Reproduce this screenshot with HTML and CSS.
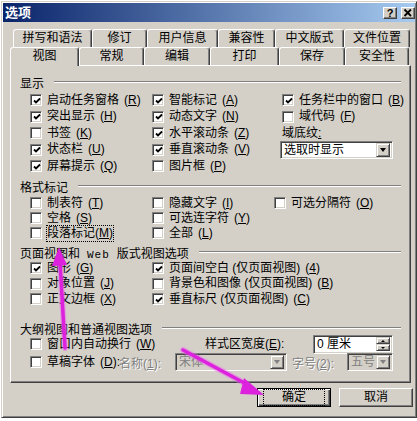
FILE: index.html
```html
<!DOCTYPE html>
<html lang="zh-CN">
<head>
    <meta charset="UTF-8">
    <title>选项</title>
    <link rel="stylesheet" href="styles.css">
</head>
<body>
    <div class="dialog">
        <div class="titlebar">
            <span class="title">选项</span>
            <div class="title-btns">
                <span class="tbtn">?</span>
                <span class="tbtn">
                    <svg width="12" height="10" viewBox="0 0 12 10"><path d="M2.5 1.5 L9 8 M9 1.5 L2.5 8" stroke="#000" stroke-width="1.8"/></svg>
                </span>
            </div>
        </div>

        <div class="tabs">
            <div class="tab-row back">
                <div class="tab">拼写和语法</div>
                <div class="tab">修订</div>
                <div class="tab">用户信息</div>
                <div class="tab">兼容性</div>
                <div class="tab">中文版式</div>
                <div class="tab">文件位置</div>
            </div>
            <div class="tab-row front">
                <div class="tab active">视图</div>
                <div class="tab">常规</div>
                <div class="tab">编辑</div>
                <div class="tab">打印</div>
                <div class="tab">保存</div>
                <div class="tab">安全性</div>
            </div>

            <div class="panel">
                <!-- 显示 -->
                <div class="group-head"><span>显示</span><i class="rule"></i></div>
                <div class="grid grid-display">
                    <label class="chk"><span class="box"><svg width="8" height="8" viewBox="0 0 8 8"><path d="M1 3.5 L3 5.5 L7 1.5" fill="none" stroke="#000" stroke-width="1.8"/></svg></span>启动任务窗格<span class="key">(<u>R</u>)</span></label>
                    <label class="chk"><span class="box"><svg width="8" height="8" viewBox="0 0 8 8"><path d="M1 3.5 L3 5.5 L7 1.5" fill="none" stroke="#000" stroke-width="1.8"/></svg></span>智能标记<span class="key">(<u>A</u>)</span></label>
                    <label class="chk"><span class="box"><svg width="8" height="8" viewBox="0 0 8 8"><path d="M1 3.5 L3 5.5 L7 1.5" fill="none" stroke="#000" stroke-width="1.8"/></svg></span>任务栏中的窗口<span class="key">(<u>B</u>)</span></label>

                    <label class="chk"><span class="box"><svg width="8" height="8" viewBox="0 0 8 8"><path d="M1 3.5 L3 5.5 L7 1.5" fill="none" stroke="#000" stroke-width="1.8"/></svg></span>突出显示<span class="key">(<u>H</u>)</span></label>
                    <label class="chk"><span class="box"><svg width="8" height="8" viewBox="0 0 8 8"><path d="M1 3.5 L3 5.5 L7 1.5" fill="none" stroke="#000" stroke-width="1.8"/></svg></span>动态文字<span class="key">(<u>N</u>)</span></label>
                    <label class="chk"><span class="box"></span>域代码<span class="key">(<u>F</u>)</span></label>

                    <label class="chk"><span class="box"></span>书签<span class="key">(<u>K</u>)</span></label>
                    <label class="chk"><span class="box"><svg width="8" height="8" viewBox="0 0 8 8"><path d="M1 3.5 L3 5.5 L7 1.5" fill="none" stroke="#000" stroke-width="1.8"/></svg></span>水平滚动条<span class="key">(<u>Z</u>)</span></label>
                    <span class="field-label">域底纹<span class="key"><u>:</u></span></span>

                    <label class="chk"><span class="box"><svg width="8" height="8" viewBox="0 0 8 8"><path d="M1 3.5 L3 5.5 L7 1.5" fill="none" stroke="#000" stroke-width="1.8"/></svg></span>状态栏<span class="key">(<u>U</u>)</span></label>
                    <label class="chk"><span class="box"><svg width="8" height="8" viewBox="0 0 8 8"><path d="M1 3.5 L3 5.5 L7 1.5" fill="none" stroke="#000" stroke-width="1.8"/></svg></span>垂直滚动条<span class="key">(<u>V</u>)</span></label>
                    <div class="combo combo-shading">
                        <span class="combo-text">选取时显示</span>
                        <span class="combo-btn"><i class="arrow"></i></span>
                    </div>

                    <label class="chk"><span class="box"><svg width="8" height="8" viewBox="0 0 8 8"><path d="M1 3.5 L3 5.5 L7 1.5" fill="none" stroke="#000" stroke-width="1.8"/></svg></span>屏幕提示<span class="key">(<u>Q</u>)</span></label>
                    <label class="chk"><span class="box"></span>图片框<span class="key">(<u>P</u>)</span></label>
                </div>

                <!-- 格式标记 -->
                <div class="group-head gap-a"><span>格式标记</span><i class="rule"></i></div>
                <div class="grid grid-marks">
                    <label class="chk"><span class="box"></span>制表符<span class="key">(<u>T</u>)</span></label>
                    <label class="chk"><span class="box"></span>隐藏文字<span class="key">(<u>I</u>)</span></label>
                    <label class="chk"><span class="box"></span>可选分隔符<span class="key">(<u>O</u>)</span></label>

                    <label class="chk"><span class="box"></span>空格<span class="key">(<u>S</u>)</span></label>
                    <label class="chk"><span class="box"></span>可选连字符<span class="key">(<u>Y</u>)</span></label>
                    <span></span>

                    <label class="chk"><span class="box"></span><span class="focus">段落标记<span class="key">(<u>M</u>)</span></span></label>
                    <label class="chk"><span class="box"></span>全部<span class="key">(<u>L</u>)</span></label>
                </div>

                <!-- 页面视图和 Web 版式视图选项 -->
                <div class="group-head gap-a"><span>页面视图和<span class="latin">Web</span>版式视图选项</span><i class="rule"></i></div>
                <div class="grid grid-web">
                    <label class="chk"><span class="box"><svg width="8" height="8" viewBox="0 0 8 8"><path d="M1 3.5 L3 5.5 L7 1.5" fill="none" stroke="#000" stroke-width="1.8"/></svg></span>图形<span class="key">(<u>G</u>)</span></label>
                    <label class="chk"><span class="box"><svg width="8" height="8" viewBox="0 0 8 8"><path d="M1 3.5 L3 5.5 L7 1.5" fill="none" stroke="#000" stroke-width="1.8"/></svg></span>页面间空白 (仅页面视图)<span class="key">(<u>4</u>)</span></label>

                    <label class="chk"><span class="box"></span>对象位置<span class="key">(<u>J</u>)</span></label>
                    <label class="chk"><span class="box"></span>背景色和图像 (仅页面视图)<span class="key">(<u>B</u>)</span></label>

                    <label class="chk"><span class="box"></span>正文边框<span class="key">(<u>X</u>)</span></label>
                    <label class="chk"><span class="box"><svg width="8" height="8" viewBox="0 0 8 8"><path d="M1 3.5 L3 5.5 L7 1.5" fill="none" stroke="#000" stroke-width="1.8"/></svg></span>垂直标尺 (仅页面视图)<span class="key">(<u>C</u>)</span></label>
                </div>

                <!-- 大纲视图和普通视图选项 -->
                <div class="group-head gap-b"><span>大纲视图和普通视图选项</span><i class="rule"></i></div>
                <div class="outline-row">
                    <label class="chk wrap-cell"><span class="box"></span>窗口内自动换行<span class="key">(<u>W</u>)</span></label>
                    <span class="field-label style-label">样式区宽度<span class="key">(<u>E</u>):</span></span>
                    <div class="spin">
                        <span class="spin-text">0 厘米</span>
                        <span class="spin-btns">
                            <span class="spin-btn"><i class="arrow up"></i></span>
                            <span class="spin-btn"><i class="arrow"></i></span>
                        </span>
                    </div>
                </div>
                <div class="outline-row">
                    <label class="chk draft-cell"><span class="box"></span>草稿字体<span class="key">(<u>D</u>):</span></label>
                    <span class="disabled name-label">名称<span class="key">(<u>1</u>):</span></span>
                    <div class="combo combo-off combo-font">
                        <span class="combo-text">宋体</span>
                        <span class="combo-btn"><i class="arrow"></i></span>
                    </div>
                    <span class="disabled size-label">字号<span class="key">(<u>2</u>):</span></span>
                    <div class="combo combo-off combo-size">
                        <span class="combo-text">五号</span>
                        <span class="combo-btn"><i class="arrow"></i></span>
                    </div>
                </div>
            </div>
        </div>

        <div class="actions">
            <button class="btn default"><span class="focus">确定</span></button>
            <button class="btn">取消</button>
        </div>
    </div>

    <!-- 两个标注箭头 -->
    <svg class="marks" width="417" height="421" viewBox="0 0 417 421">
        <g stroke="#ee66ee" stroke-width="6" stroke-linecap="round" opacity="0.45" fill="#ee66ee">
            <path d="M65 348 L60 262"/>
            <path d="M183 350 L248 385"/>
        </g>
        <g stroke="#dd22dd" stroke-width="3.5" stroke-linecap="round" fill="#dd22dd">
            <path d="M65 348 L60 262"/>
            <path d="M183 350 L248 385"/>
        </g>
        <polygon points="59,247 52,266 67,265" fill="#dd22dd"/>
        <polygon points="264,395 244,378 240,394" fill="#dd22dd"/>
    </svg>
</body>
</html>
```

FILE: styles.css
```css
body {
    margin: 0;
    background: #fff;
    font-family: "Liberation Sans", "Noto Sans CJK SC", sans-serif;
    font-size: 12px;
    color: #000;
    text-autospace: no-autospace;
}
/* 快捷键字母，如 (R) */
.key {
    font-family: "Liberation Sans", sans-serif;
    text-autospace: no-autospace;
}
.dialog {
    box-sizing: border-box;
    width: 416px;
    height: 417px;
    margin: 1px 0 0 1px;
    padding: 1px;
    background: #d4d0c8;
    border: 1px solid;
    border-color: #d4d0c8 #404040 #404040 #d4d0c8;
    box-shadow: inset 1px 1px 0 #fff, inset -1px -1px 0 #808080;
}
.titlebar {
    display: flex;
    align-items: center;
    justify-content: space-between;
    height: 19px;
    padding-left: 2px;
    background: linear-gradient(to right, #0a246a, #a6caf0);
}
.title {
    color: #fff;
    font-weight: bold;
    font-size: 13px;
    line-height: 19px;
}
.title-btns {
    display: flex;
    gap: 4px;
}
.tbtn {
    box-sizing: border-box;
    display: flex;
    align-items: center;
    justify-content: center;
    width: 14px;
    height: 12px;
    background: #d4d0c8;
    border: 1px solid;
    border-color: #fff #404040 #404040 #fff;
    box-shadow: inset -1px -1px 0 #808080;
    font: bold 11px/10px "Liberation Sans", sans-serif;
}

/* tabs */
.tabs {
    margin: 7px 0 0 7px;
}
.tab-row {
    display: grid;
    height: 18px;
}
.tab-row.back {
    margin-left: 3px;
    grid-template-columns: 79px 55px 71px 57px 69px 66px;
}
.tab-row.front {
    position: relative;
    z-index: 1;
    grid-template-columns: 69px 65px 66px 69px 66px 64px;
}
.tab {
    box-sizing: border-box;
    height: 18px;
    background: #d4d0c8;
    border: 1px solid;
    border-bottom: 0;
    border-color: #fff #404040 transparent #fff;
    border-radius: 3px 3px 0 0;
    box-shadow: inset -1px 0 0 #808080;
    text-align: center;
    line-height: 17px;
}
.tab.active {
    height: 19px;
}
.panel {
    box-sizing: border-box;
    width: 401px;
    height: 318px;
    padding: 9px 9px 0 9px;
    border: 1px solid;
    border-color: #fff #404040 #404040 #fff;
    box-shadow: inset -1px -1px 0 #808080;
}

/* groups */
.group-head {
    display: flex;
    align-items: center;
    gap: 10px;
    height: 14px;
    white-space: nowrap;
}
.group-head .rule {
    flex: 1;
    height: 0;
    border-top: 1px solid #808080;
    border-bottom: 1px solid #fff;
}
.gap-a { margin-top: 4.5px; }
.gap-b { margin-top: 14px; }
.latin {
    font-family: "Liberation Mono", monospace;
    font-size: 11px;
    margin: 0 7px;
    letter-spacing: 1px;
}
.grid {
    display: grid;
    margin-left: 10px;
}
.grid-display {
    margin-top: 3px;
    grid-template-columns: 122px 130px 1fr;
    grid-template-rows: repeat(5, 16.5px);
}
.grid-marks {
    margin-top: 2.5px;
    grid-template-columns: 122px 122px 1fr;
    grid-template-rows: repeat(3, 15px);
}
.grid-web {
    margin-top: 1.5px;
    grid-template-columns: 122px 1fr;
    grid-template-rows: repeat(3, 15.5px);
}
.chk {
    display: flex;
    align-items: center;
    gap: 5px;
    white-space: nowrap;
    line-height: 15px;
}
.box {
    box-sizing: border-box;
    display: flex;
    align-items: center;
    justify-content: center;
    flex: none;
    width: 12px;
    height: 12px;
    background: #fff;
    border: 1px solid;
    border-color: #808080 #fff #fff #808080;
    box-shadow: inset 1px 1px 0 #404040, inset -1px -1px 0 #d4d0c8;
}
.box svg {
    margin: 1px 0 0 1px;
}
.focus {
    outline: 1px dotted #000;
    outline-offset: 0;
}
.field-label {
    white-space: nowrap;
    line-height: 16px;
}
.disabled {
    color: #808080;
    text-shadow: 1px 1px 0 #fff;
    white-space: nowrap;
}

/* combo boxes and spinner */
.combo,
.spin {
    box-sizing: border-box;
    display: flex;
    align-items: center;
    height: 18px;
    background: #fff;
    border: 1px solid;
    border-color: #808080 #fff #fff #808080;
    box-shadow: inset 1px 1px 0 #404040, inset -1px -1px 0 #d4d0c8;
    padding: 2px 2px 2px 3px;
}
.combo-shading {
    width: 113px;
    margin: -1px 0 0 -2px;
}
.combo-text,
.spin-text {
    flex: 1;
    line-height: 14px;
    white-space: nowrap;
}
.combo-btn,
.spin-btn {
    box-sizing: border-box;
    display: flex;
    align-items: center;
    justify-content: center;
    width: 14px;
    height: 14px;
    background: #d4d0c8;
    border: 1px solid;
    border-color: #d4d0c8 #404040 #404040 #d4d0c8;
    box-shadow: inset 1px 1px 0 #fff, inset -1px -1px 0 #808080;
}
.arrow {
    width: 0;
    height: 0;
    border-left: 3.5px solid transparent;
    border-right: 3.5px solid transparent;
    border-top: 4px solid #000;
}
.arrow.up {
    border-top: 0;
    border-bottom: 3px solid #000;
}
.combo-off {
    background: #d4d0c8;
    color: #808080;
}
.combo-off .arrow {
    border-top-color: #808080;
}
.combo-font {
    width: 112px;
}
.combo-size {
    width: 46px;
}
.spin {
    width: 80px;
    height: 19px;
}
.spin-btns {
    display: flex;
    flex-direction: column;
}
.spin-btn {
    height: 7px;
}
.spin-btn .arrow {
    border-left-width: 2.5px;
    border-right-width: 2.5px;
    border-top-width: 2px;
}
.spin-btn .arrow.up {
    border-bottom-width: 2px;
}
.outline-row {
    display: flex;
    align-items: center;
    height: 18px;
    margin-left: 10px;
}
.wrap-cell { width: 175px; }
.style-label { width: 108px; }
.draft-cell { width: 89px; }
.name-label { width: 56px; }
.size-label {
    width: 55px;
    margin-left: 5px;
}

/* buttons */
.actions {
    display: flex;
    justify-content: flex-end;
    gap: 8px;
    margin: 5px 2px 0 0;
}
.btn {
    box-sizing: border-box;
    width: 74px;
    height: 19px;
    padding: 0;
    background: #d4d0c8;
    font: inherit;
    line-height: 15px;
    border: 1px solid;
    border-color: #fff #404040 #404040 #fff;
    box-shadow: inset -1px -1px 0 #808080;
}
.btn.default {
    border: 1px solid #000;
    box-shadow: inset 1px 1px 0 #fff, inset -1px -1px 0 #404040, inset -2px -2px 0 #808080;
}
.btn.default .focus {
    display: inline-block;
    width: 60px;
}

.marks {
    position: absolute;
    top: 0;
    left: 0;
    pointer-events: none;
}
```
